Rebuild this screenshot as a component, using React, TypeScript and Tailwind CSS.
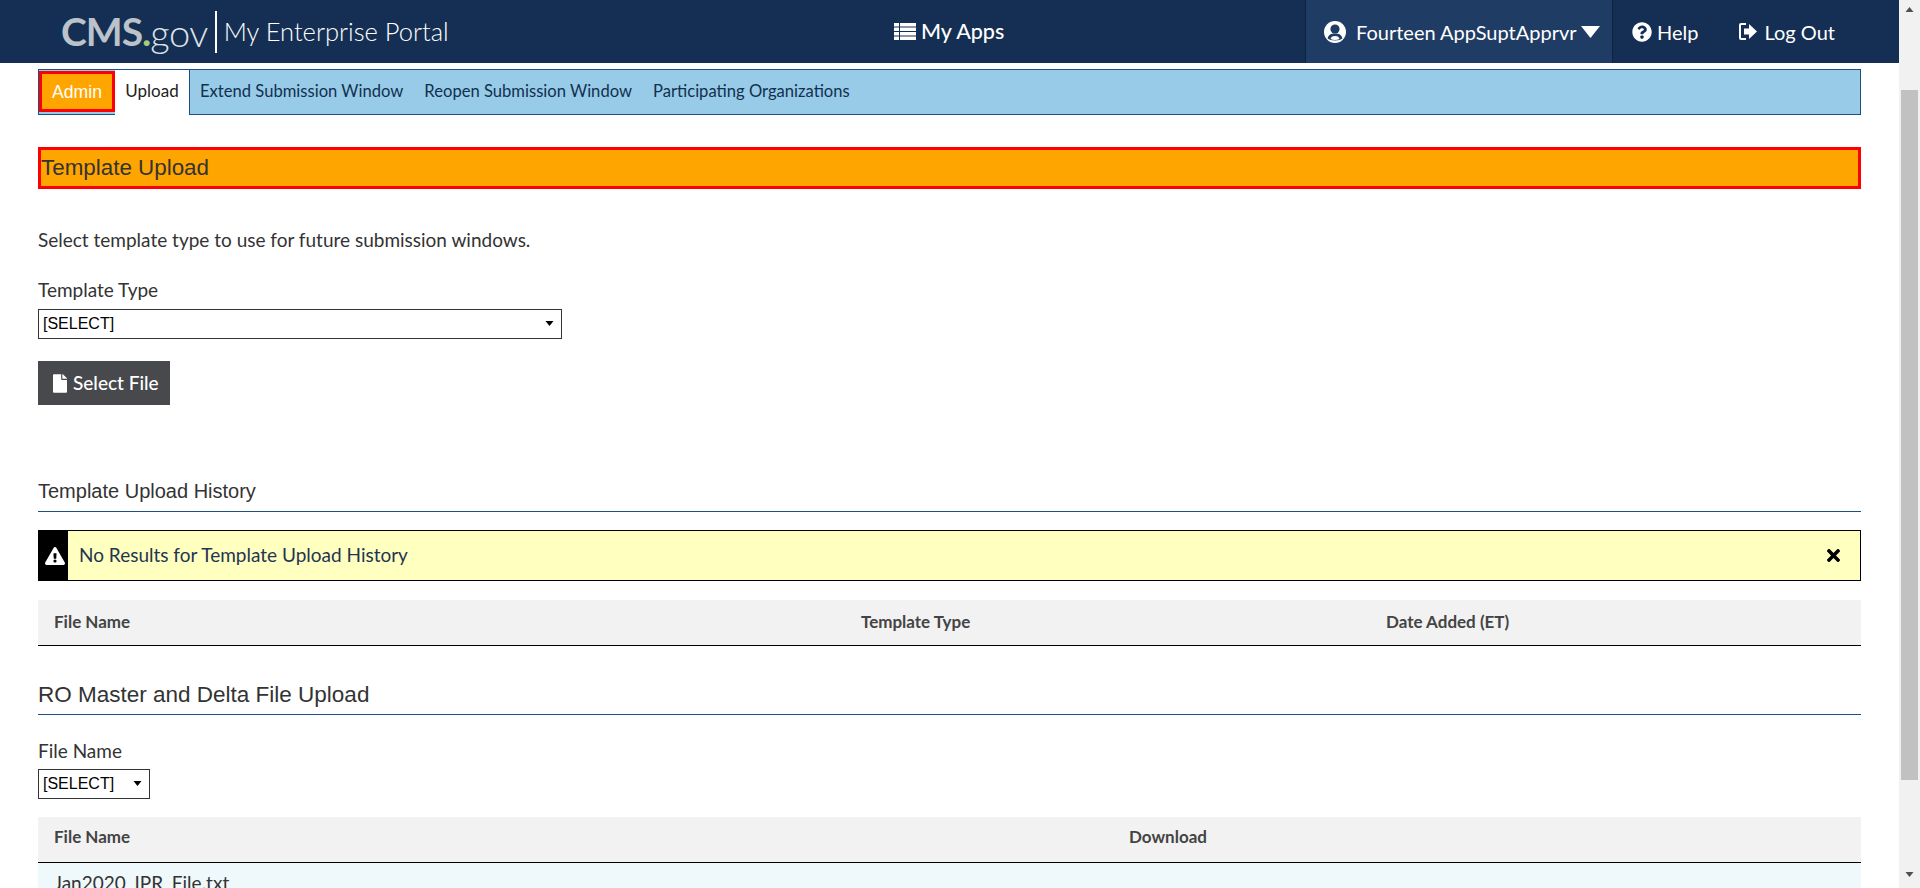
import { FaQuestionCircle, FaFile, FaExclamationTriangle, FaTimes } from "react-icons/fa";

const tabs = ["Extend Submission Window", "Reopen Submission Window", "Participating Organizations"];

function Caret({ className }: { className: string }) {
  return (
    <svg viewBox="0 0 16 10" className={className}>
      <path d="M0 0h16L8 10z" fill="currentColor" />
    </svg>
  );
}

function ListIcon() {
  return (
    <svg viewBox="0 0 22 17" className="h-[17px] w-[22px]" fill="currentColor">
      <path d="M0 0h5v3.5H0zM6 0h16v3.5H6zM0 4.5h5V8H0zM6 4.5h16V8H6zM0 9h5v3.5H0zM6 9h16v3.5H6zM0 13.5h5V17H0zM6 13.5h16V17H6z" />
    </svg>
  );
}

function UserIcon() {
  return (
    <svg viewBox="0 0 22 22" className="mr-[10px] h-[22px] w-[22px]">
      <circle cx="11" cy="11" r="11" fill="#fff" />
      <circle cx="11" cy="8" r="4.6" fill="#1f3c64" />
      <path d="M3.6 17.5C4.5 13.5 7 12.5 11 12.5s6.500 1 7.400 5c-1.600 1-4 2-7.400 2s-5.800-1-7.400-2z" fill="#1f3c64" />
      <path d="M6.500 18c.4-2 1.800-3 4.500-3s4.100 1 4.500 3c-1.400.6-2.800.9-4.500.9s-3.100-.3-4.500-.9z" fill="#fff" />
    </svg>
  );
}

function LogOutIcon() {
  return (
    <svg viewBox="0 0 18 17" className="mr-[7px] h-[17px] w-[18px]" fill="currentColor">
      <path d="M7 0H2a2 2 0 0 0-2 2v13a2 2 0 0 0 2 2h5v-2H2V2h5z" />
      <path d="M5 5.500h5V1l8 7.500-8 7.500v-4.500H5z" />
    </svg>
  );
}

function SectionTitle({ title, className }: { title: string; className: string }) {
  return (
    <div className={`border-b border-[#1d4f85] font-['Liberation_Sans',sans-serif] text-[#333] ${className}`}>{title}</div>
  );
}

function TableHead({ cols, className }: { cols: { label: string; width: string }[]; className: string }) {
  return (
    <div className={`flex h-[46px] items-center border-b border-black bg-[#f2f2f2] pl-[16px] text-[17px] font-bold text-[#444] ${className}`}>
      {cols.map((c) => (
        <div key={c.label} className={c.width}>{c.label}</div>
      ))}
    </div>
  );
}

function SelectBox({ className }: { className: string }) {
  return (
    <div className={`relative h-[30px] ${className}`}>
      <select className="block h-full w-full appearance-none border border-[#333] bg-white pl-[4px] font-['Liberation_Sans',sans-serif] text-[16px] text-black">
        <option>[SELECT]</option>
      </select>
      <Caret className="pointer-events-none absolute top-[12px] right-[8px] h-[5px] w-[9px] text-black" />
    </div>
  );
}

export default function App() {
  return (
    <div className="flex h-[888px] overflow-hidden bg-white font-['Lato',sans-serif] text-[#333]">
      <div className="flex min-w-0 flex-1 flex-col">
        <header className="flex h-[63px] shrink-0 items-center bg-[#142f53] text-white">
          <div className="flex w-[894px] items-center pl-[61px]">
            <span className="text-[39px] leading-none font-bold tracking-[-1px] text-[#bcc2ca]">CMS<span className="text-[#a5cd7c]">.</span></span>
            <span className="text-[38px] leading-none font-light tracking-[-0.5px] text-[#dfe2e6]">gov</span>
            <div className="mx-[7px] h-[42px] w-[2px] bg-white" />
            <span className="text-[25.5px] font-light whitespace-nowrap">My Enterprise Portal</span>
          </div>
          <div className="flex w-[411px] items-center gap-[5px] text-[21.500px] font-medium">
            <ListIcon />
            My Apps
          </div>
          <div className="flex h-full w-[308px] items-center border-x border-[#10233d] bg-[#1f3c64] pl-[18px] text-[20px]">
            <UserIcon />
            <span className="whitespace-nowrap">Fourteen AppSuptApprvr</span>
            <Caret className="ml-[4px] h-[12px] w-[19px]" />
          </div>
          <div className="flex items-center pl-[19px] text-[20px]">
            <FaQuestionCircle className="mr-[5px] h-[20px] w-[20px]" />
            Help
          </div>
          <div className="flex items-center pl-[41px] text-[20px]">
            <LogOutIcon />
            Log Out
          </div>
        </header>

        <main className="px-[38px] pt-[6px]">
          <nav className="flex h-[46px] border border-[#1d4f85] bg-[#97cbe8] text-[16.6px] leading-[42px] text-[#12304f]">
            <div className="mt-[1px] flex h-[41px] w-[76px] items-center justify-center border-[3px] border-[#f00] bg-[#ffa500] font-['Liberation_Sans',sans-serif] text-[17.6px] text-white">Admin</div>
            <div className="-mb-px flex w-[75px] justify-center border-r border-[#1d4f85] bg-white text-[17px] text-[#222]">Upload</div>
            <div className="flex gap-[21px] pl-[10px]">
              {tabs.map((t) => (
                <span key={t}>{t}</span>
              ))}
            </div>
          </nav>

          <div className="mt-[32px] flex h-[42px] items-center border-[3px] border-[#f00] bg-[#ffa500] font-['Liberation_Sans',sans-serif] text-[22.4px] text-[#333]">Template Upload</div>

          <p className="mt-[38px] text-[19px] leading-[26px]">Select template type to use for future submission windows.</p>

          <label className="mt-[24px] block text-[19px] leading-[26px]">Template Type</label>
          <SelectBox className="mt-[6px] w-[524px]" />

          <button className="mt-[22px] flex h-[44px] w-[132px] items-center gap-[6px] bg-[#47494d] pl-[15px] text-[19px] font-medium whitespace-nowrap text-white">
            <FaFile className="h-[19px] w-[14px]" />
            Select File
          </button>

          <SectionTitle title="Template Upload History" className="mt-[73px] pb-[7px] text-[20px] leading-[26px]" />

          <div className="mt-[18px] flex h-[51px] items-stretch border border-l-0 border-black bg-[#ffffc0]">
            <div className="flex w-[30px] items-center justify-center bg-black pl-[4px] text-white">
              <FaExclamationTriangle className="h-[18px] w-[20px]" />
            </div>
            <div className="flex flex-1 items-center pl-[11px] text-[19px] text-[#1f3550]">No Results for Template Upload History</div>
            <div className="flex items-center pr-[18px] text-black">
              <FaTimes className="h-[19px] w-[17px]" />
            </div>
          </div>

          <div className="mt-[19px]">
            <TableHead
              className="pb-[2px]"
              cols={[
                { label: "File Name", width: "w-[807px]" },
                { label: "Template Type", width: "w-[525px]" },
                { label: "Date Added (ET)", width: "flex-1" },
              ]}
            />
          </div>

          <SectionTitle title="RO Master and Delta File Upload" className="mt-[34px] pb-[4px] text-[22.5px] leading-[30px]" />

          <label className="mt-[23px] block text-[19px] leading-[26px]">File Name</label>
          <SelectBox className="mt-[5px] w-[112px]" />

          <div className="mt-[18px]">
            <TableHead
              className="pb-[6px]"
              cols={[
                { label: "File Name", width: "w-[1075px]" },
                { label: "Download", width: "flex-1" },
              ]}
            />
            <div className="h-[60px] bg-[#eff8fb] pl-[16px] pt-[6px] text-[19px]">Jan2020_IPR_File.txt</div>
          </div>
        </main>
      </div>

      <aside className="flex w-[21px] shrink-0 flex-col items-center bg-[#f1f1f1]">
        <Caret className="mt-[7px] h-[5px] w-[9px] rotate-180 text-[#505050]" />
        <div className="mt-[78px] h-[690px] w-[17px] bg-[#c1c1c1]" />
        <Caret className="mt-[92px] h-[5px] w-[9px] text-[#505050]" />
      </aside>
    </div>
  );
}
